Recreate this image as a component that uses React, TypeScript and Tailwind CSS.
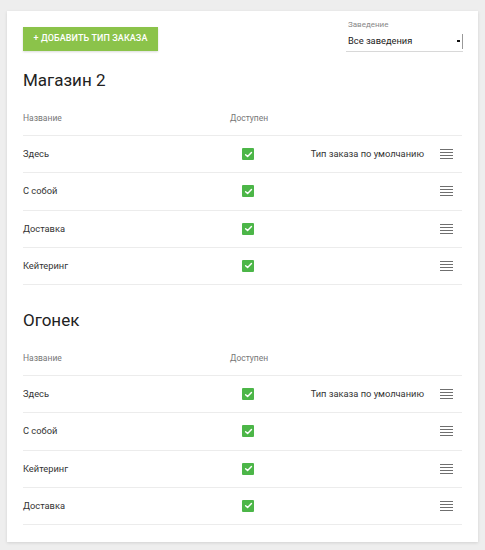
import React from 'react';

type Row = { name: string; isDefault?: boolean };

const sections: { title: string; rows: Row[] }[] = [
  {
    title: 'Магазин 2',
    rows: [{ name: 'Здесь', isDefault: true }, { name: 'С собой' }, { name: 'Доставка' }, { name: 'Кейтеринг' }],
  },
  {
    title: 'Огонек',
    rows: [{ name: 'Здесь', isDefault: true }, { name: 'С собой' }, { name: 'Кейтеринг' }, { name: 'Доставка' }],
  },
];

const CheckBox = () => (
  <span className="w-[12px] h-[12px] rounded-[1px] bg-[#4cb648] flex items-center justify-center">
    <svg width="9" height="9" viewBox="0 0 10 10" fill="none">
      <path d="M1.8 5.2 L4 7.3 L8.3 2.8" stroke="white" strokeWidth="1.6" strokeLinecap="round" strokeLinejoin="round" />
    </svg>
  </span>
);

const DragHandle = () => (
  <span className="flex flex-col gap-[2px] w-[13px]">
    <span className="h-[1px] bg-[#6f6f6f]" />
    <span className="h-[1px] bg-[#6f6f6f]" />
    <span className="h-[1px] bg-[#6f6f6f]" />
    <span className="h-[1px] bg-[#6f6f6f]" />
  </span>
);

const Section: React.FC<{ title: string; rows: Row[]; first?: boolean }> = ({ title, rows, first }) => (
  <div className={first ? 'mt-[16px]' : 'mt-[23px]'}>
    <h2 className="text-[17px] leading-[24px] text-[#222]">{title}</h2>
    <div className="mt-[9px] h-[35px] flex items-center border-b border-[#ececec] text-[8.5px] text-[#777]">
      <span className="w-[207px]">Название</span>
      <span>Доступен</span>
    </div>
    {rows.map((row, i) => (
      <div key={i} className="h-[37.25px] flex items-center border-b border-[#ececec] text-[9.3px] text-[#333]">
        <span className="w-[219px]">{row.name}</span>
        <CheckBox />
        <span className="flex-1 text-right pr-[16px]">{row.isDefault ? 'Тип заказа по умолчанию' : ''}</span>
        <span className="pr-[9px]"><DragHandle /></span>
      </div>
    ))}
  </div>
);

export default function App() {
  return (
    <div className="min-h-[550px] bg-[#eeeeee] pt-[11px] px-[7px] font-['Roboto',sans-serif]">
      <div className="w-[471px] h-[531px] bg-white shadow-[0_1px_3px_rgba(0,0,0,0.12)] pl-[16px] pr-[16px] pt-[8px]">
        <div className="flex justify-between items-start">
          <button className="mt-[8px] h-[24px] w-[135px] bg-[#8bc34a] text-white text-[9px] font-medium uppercase tracking-[0.1px] shadow-[0_1px_2px_rgba(0,0,0,0.15)]">
            + Добавить тип заказа
          </button>
          <div className="w-[117px] mr-[-1px]">
            <div className="text-[8px] leading-[12px] text-[#888] pl-[2px]">Заведение</div>
            <div className="h-[21px] flex items-center justify-between border-b border-[#d8d8d8] pl-[2px]">
              <span className="text-[9.3px] text-[#222]">Все заведения</span>
              <span className="h-[15px] w-[6px] border-r border-[#999] flex items-center justify-start">
                <span className="w-[3px] h-[2px] bg-[#111]" />
              </span>
            </div>
          </div>
        </div>
        {sections.map((s, i) => (
          <Section key={i} title={s.title} rows={s.rows} first={i === 0} />
        ))}
      </div>
    </div>
  );
}
